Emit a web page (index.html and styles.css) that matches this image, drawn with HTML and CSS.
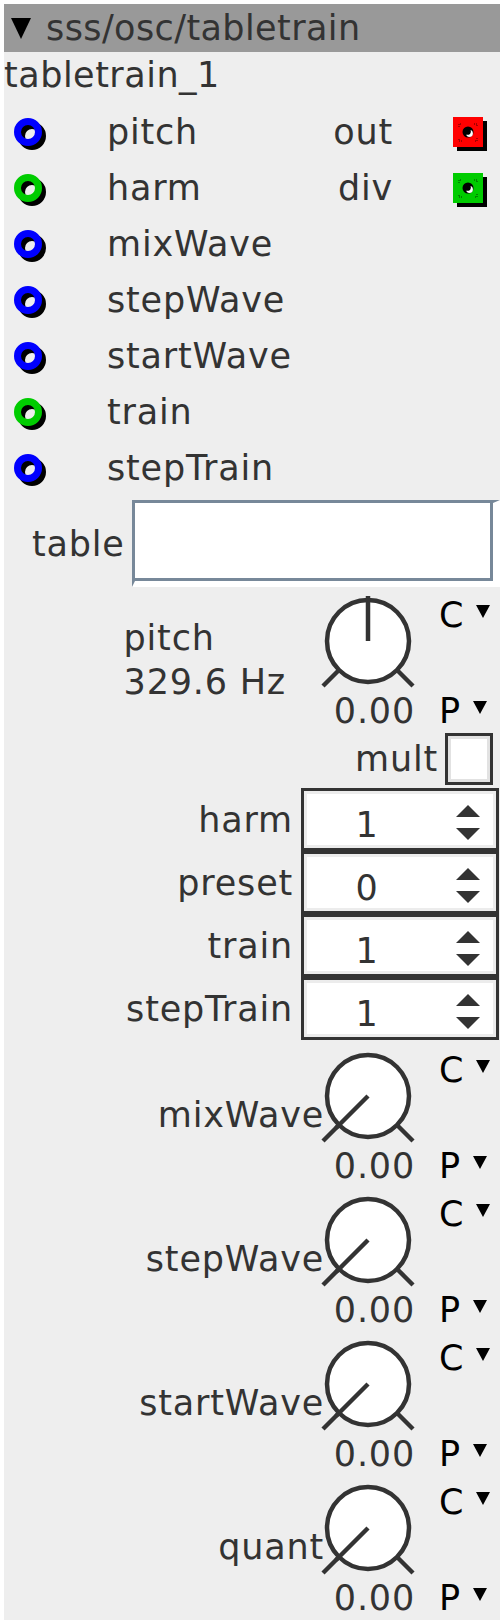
FILE: index.html
```html
<!DOCTYPE html>
<html lang="en">
<head>
    <meta charset="UTF-8">
    <meta name="viewport" content="width=device-width, initial-scale=1.0">
    <title>sss/osc/tabletrain</title>
    <link rel="stylesheet" href="styles.css">
</head>
<body>
    <div class="panel">
        <header class="panel-header"><span class="caret"></span>sss/osc/tabletrain</header>
        <div class="instance">tabletrain_1</div>

        <!-- Inputs and outputs -->
        <div class="ports">
            <div class="port-row">
                <div class="in-port">
                    <svg class="jack jack--blue" width="40" height="40" viewBox="0 0 40 40">
                        <circle class="shadow" cx="24" cy="24" r="10.5"/>
                        <circle class="ring" cx="20" cy="20" r="10.5"/>
                    </svg>
                </div>
                <div class="in-label">pitch</div>
                <div class="out-label">out</div>
                <div class="out-port">
                    <svg class="out-jack out-jack--red" width="40" height="40" viewBox="0 0 40 40">
                        <rect x="9" y="9" width="30" height="30" fill="#000"/>
                        <rect class="face" x="5" y="5" width="30" height="30"/>
                        <path class="focus" d="M11 15v-3h3M26 12h3v3M29 26v3h-3M14 29h-3v-3"/>
                        <circle cx="20" cy="20" r="5.5" fill="#000"/>
                        <circle cx="21.5" cy="21.5" r="3.4" fill="#fff"/>
                        <circle cx="19.4" cy="19.4" r="3.4" fill="#000"/>
                    </svg>
                </div>
            </div>
            <div class="port-row">
                <div class="in-port">
                    <svg class="jack jack--green" width="40" height="40" viewBox="0 0 40 40">
                        <circle class="shadow" cx="24" cy="24" r="10.5"/>
                        <circle class="ring" cx="20" cy="20" r="10.5"/>
                    </svg>
                </div>
                <div class="in-label">harm</div>
                <div class="out-label">div</div>
                <div class="out-port">
                    <svg class="out-jack out-jack--green" width="40" height="40" viewBox="0 0 40 40">
                        <rect x="9" y="9" width="30" height="30" fill="#000"/>
                        <rect class="face" x="5" y="5" width="30" height="30"/>
                        <path class="focus" d="M11 15v-3h3M26 12h3v3M29 26v3h-3M14 29h-3v-3"/>
                        <circle cx="20" cy="20" r="5.5" fill="#000"/>
                        <circle cx="21.5" cy="21.5" r="3.4" fill="#fff"/>
                        <circle cx="19.4" cy="19.4" r="3.4" fill="#000"/>
                    </svg>
                </div>
            </div>
            <div class="port-row">
                <div class="in-port">
                    <svg class="jack jack--blue" width="40" height="40" viewBox="0 0 40 40">
                        <circle class="shadow" cx="24" cy="24" r="10.5"/>
                        <circle class="ring" cx="20" cy="20" r="10.5"/>
                    </svg>
                </div>
                <div class="in-label">mixWave</div>
            </div>
            <div class="port-row">
                <div class="in-port">
                    <svg class="jack jack--blue" width="40" height="40" viewBox="0 0 40 40">
                        <circle class="shadow" cx="24" cy="24" r="10.5"/>
                        <circle class="ring" cx="20" cy="20" r="10.5"/>
                    </svg>
                </div>
                <div class="in-label">stepWave</div>
            </div>
            <div class="port-row">
                <div class="in-port">
                    <svg class="jack jack--blue" width="40" height="40" viewBox="0 0 40 40">
                        <circle class="shadow" cx="24" cy="24" r="10.5"/>
                        <circle class="ring" cx="20" cy="20" r="10.5"/>
                    </svg>
                </div>
                <div class="in-label">startWave</div>
            </div>
            <div class="port-row">
                <div class="in-port">
                    <svg class="jack jack--green" width="40" height="40" viewBox="0 0 40 40">
                        <circle class="shadow" cx="24" cy="24" r="10.5"/>
                        <circle class="ring" cx="20" cy="20" r="10.5"/>
                    </svg>
                </div>
                <div class="in-label">train</div>
            </div>
            <div class="port-row">
                <div class="in-port">
                    <svg class="jack jack--blue" width="40" height="40" viewBox="0 0 40 40">
                        <circle class="shadow" cx="24" cy="24" r="10.5"/>
                        <circle class="ring" cx="20" cy="20" r="10.5"/>
                    </svg>
                </div>
                <div class="in-label">stepTrain</div>
            </div>
        </div>

        <!-- Table name -->
        <div class="field-row">
            <span class="field-label">table</span>
            <div class="text-field"></div>
        </div>

        <!-- Pitch knob -->
        <div class="knob-row">
            <div class="knob-label knob-label--stacked">pitch<br>329.6 Hz</div>
            <div class="knob">
                <svg class="dial" width="88" height="108" viewBox="0 0 88 108">
                    <line x1="15" y1="85" x2="-1" y2="101"/>
                    <line x1="73" y1="85" x2="89" y2="101"/>
                    <circle cx="44" cy="56" r="41"/>
                    <line x1="44" y1="56" x2="44" y2="11"/>
                </svg>
                <div class="knob-value">0.00</div>
            </div>
            <div class="knob-modes">
                <div class="mode">C<span class="drop"></span></div>
                <div class="mode mode--bottom">P<span class="drop"></span></div>
            </div>
        </div>

        <div class="check-row">
            <span class="check-label">mult</span>
            <span class="checkbox"></span>
        </div>

        <!-- Integer settings -->
        <div class="spin-row">
            <span class="spin-label">harm</span>
            <div class="spinbox">
                <span class="spin-value">1</span>
                <span class="spin-arrows"><span class="arrow-up"></span><span class="arrow-down"></span></span>
            </div>
        </div>
        <div class="spin-row">
            <span class="spin-label">preset</span>
            <div class="spinbox">
                <span class="spin-value">0</span>
                <span class="spin-arrows"><span class="arrow-up"></span><span class="arrow-down"></span></span>
            </div>
        </div>
        <div class="spin-row">
            <span class="spin-label">train</span>
            <div class="spinbox">
                <span class="spin-value">1</span>
                <span class="spin-arrows"><span class="arrow-up"></span><span class="arrow-down"></span></span>
            </div>
        </div>
        <div class="spin-row">
            <span class="spin-label">stepTrain</span>
            <div class="spinbox">
                <span class="spin-value">1</span>
                <span class="spin-arrows"><span class="arrow-up"></span><span class="arrow-down"></span></span>
            </div>
        </div>

        <!-- Wave knobs -->
        <div class="knob-row">
            <div class="knob-label">mixWave</div>
            <div class="knob">
                <svg class="dial" width="88" height="108" viewBox="0 0 88 108">
                    <line x1="15" y1="85" x2="-1" y2="101"/>
                    <line x1="73" y1="85" x2="89" y2="101"/>
                    <circle cx="44" cy="56" r="41"/>
                    <line x1="44" y1="56" x2="12" y2="88"/>
                </svg>
                <div class="knob-value">0.00</div>
            </div>
            <div class="knob-modes">
                <div class="mode">C<span class="drop"></span></div>
                <div class="mode mode--bottom">P<span class="drop"></span></div>
            </div>
        </div>
        <div class="knob-row">
            <div class="knob-label">stepWave</div>
            <div class="knob">
                <svg class="dial" width="88" height="108" viewBox="0 0 88 108">
                    <line x1="15" y1="85" x2="-1" y2="101"/>
                    <line x1="73" y1="85" x2="89" y2="101"/>
                    <circle cx="44" cy="56" r="41"/>
                    <line x1="44" y1="56" x2="12" y2="88"/>
                </svg>
                <div class="knob-value">0.00</div>
            </div>
            <div class="knob-modes">
                <div class="mode">C<span class="drop"></span></div>
                <div class="mode mode--bottom">P<span class="drop"></span></div>
            </div>
        </div>
        <div class="knob-row">
            <div class="knob-label">startWave</div>
            <div class="knob">
                <svg class="dial" width="88" height="108" viewBox="0 0 88 108">
                    <line x1="15" y1="85" x2="-1" y2="101"/>
                    <line x1="73" y1="85" x2="89" y2="101"/>
                    <circle cx="44" cy="56" r="41"/>
                    <line x1="44" y1="56" x2="12" y2="88"/>
                </svg>
                <div class="knob-value">0.00</div>
            </div>
            <div class="knob-modes">
                <div class="mode">C<span class="drop"></span></div>
                <div class="mode mode--bottom">P<span class="drop"></span></div>
            </div>
        </div>
        <div class="knob-row">
            <div class="knob-label">quant</div>
            <div class="knob">
                <svg class="dial" width="88" height="108" viewBox="0 0 88 108">
                    <line x1="15" y1="85" x2="-1" y2="101"/>
                    <line x1="73" y1="85" x2="89" y2="101"/>
                    <circle cx="44" cy="56" r="41"/>
                    <line x1="44" y1="56" x2="12" y2="88"/>
                </svg>
                <div class="knob-value">0.00</div>
            </div>
            <div class="knob-modes">
                <div class="mode">C<span class="drop"></span></div>
                <div class="mode mode--bottom">P<span class="drop"></span></div>
            </div>
        </div>
    </div>
</body>
</html>
```

FILE: styles.css
```css
/* Basic Reset */
* {
    box-sizing: border-box;
    margin: 0;
    padding: 0;
}

body {
    margin: 4px;
    background-color: #fff;
    font-family: "DejaVu Sans", sans-serif;
    font-size: 35px;
    letter-spacing: 0.8px;
    color: #333;
}

.panel {
    width: 496px;
    background-color: #eee;
    padding-bottom: 4px;
}

.panel-header {
    height: 48px;
    line-height: 48px;
    background-color: #999;
    display: flex;
    align-items: center;
    padding-left: 7px;
    letter-spacing: 0.4px;
}

.caret {
    width: 0;
    height: 0;
    border-left: 10px solid transparent;
    border-right: 10px solid transparent;
    border-top: 21px solid #000;
    margin-right: 15px;
}

.instance {
    line-height: 46px;
    padding-bottom: 6px;
    letter-spacing: 0.5px;
}

/* Ports */
.port-row {
    height: 56px;
    display: flex;
    align-items: center;
}

.in-port {
    width: 103px;
    padding-left: 4px;
}

.jack,
.out-jack {
    display: block;
    overflow: visible;
}

.jack circle {
    fill: none;
    stroke-width: 7;
}

.jack .shadow {
    stroke: #000;
}

.jack--blue .ring {
    stroke: #0000ff;
}

.jack--green .ring {
    stroke: #00cc00;
}

.in-label {
    flex: 1;
}

.out-port {
    width: 107px;
    padding-left: 55px;
}

.out-jack--red .face {
    fill: #ff0000;
}

.out-jack--green .face {
    fill: #00cc00;
}

.out-jack .focus {
    fill: none;
    stroke: #000;
    stroke-width: 1;
    stroke-dasharray: 1 1;
    opacity: 0.7;
}

/* Table field */
.field-row {
    display: flex;
    align-items: center;
    padding: 4px 0 0 28px;
    margin-bottom: -2px;
}

.field-label {
    flex: 1;
}

.text-field {
    flex-shrink: 0;
    width: 368px;
    height: 87px;
    background-color: #fff;
    border-style: solid;
    border-width: 3px 7px 6px 3px;
    border-color: #778899 #fff #fff #778899;
    box-shadow: inset -3px -3px 0 #778899;
}

/* Knobs */
.knob-row {
    height: 144px;
    display: flex;
    justify-content: flex-end;
}

.knob-label {
    align-self: center;
    margin-top: 6px;
    line-height: 44px;
    white-space: nowrap;
}

.knob-label--stacked {
    margin-right: 38px;
}

.knob {
    width: 88px;
    display: flex;
    flex-direction: column;
}

.dial {
    display: block;
    overflow: visible;
}

.dial circle {
    fill: #fff;
    stroke: #333;
    stroke-width: 4.5;
}

.dial line {
    stroke: #333;
    stroke-width: 4.5;
}

.knob-value {
    line-height: 36px;
    text-align: right;
    margin-right: -3px;
    white-space: nowrap;
}

.knob-modes {
    width: 88px;
    padding: 10px 0 0 27px;
    display: flex;
    flex-direction: column;
    justify-content: space-between;
    color: #000;
}

.mode {
    line-height: 40px;
}

.mode--bottom {
    line-height: 36px;
}

.drop {
    display: inline-block;
    width: 0;
    height: 0;
    border-left: 7.5px solid transparent;
    border-right: 7.5px solid transparent;
    border-top: 13px solid #000;
    margin-left: 12px;
    vertical-align: 9px;
}

/* Checkbox */
.check-row {
    height: 59px;
    display: flex;
    justify-content: flex-end;
    align-items: center;
    padding-right: 7px;
}

.check-label {
    margin-right: 7px;
}

.checkbox {
    width: 48px;
    height: 52px;
    background-color: #fff;
    border: 3px solid #333;
    box-shadow: inset 0 0 0 3px #e2e2e2;
}

/* Spin boxes */
.spin-row {
    height: 63px;
    display: flex;
    justify-content: flex-end;
    align-items: center;
    padding-right: 1px;
}

.spin-label {
    margin-right: 8px;
}

.spinbox {
    width: 198px;
    height: 63px;
    background-color: #fff;
    border: 3px solid #333;
    box-shadow: inset 0 0 0 3px #ececec;
    display: flex;
    align-items: center;
}

.spin-value {
    width: 126px;
    text-align: center;
    padding-top: 10px;
}

.spin-arrows {
    flex: 1;
    display: flex;
    flex-direction: column;
    align-items: flex-end;
    gap: 11px;
    padding: 5px 16px 0 0;
}

.arrow-up,
.arrow-down {
    width: 0;
    height: 0;
    border-left: 12.5px solid transparent;
    border-right: 12.5px solid transparent;
}

.arrow-up {
    border-bottom: 12px solid #333;
}

.arrow-down {
    border-top: 12px solid #333;
}
```
